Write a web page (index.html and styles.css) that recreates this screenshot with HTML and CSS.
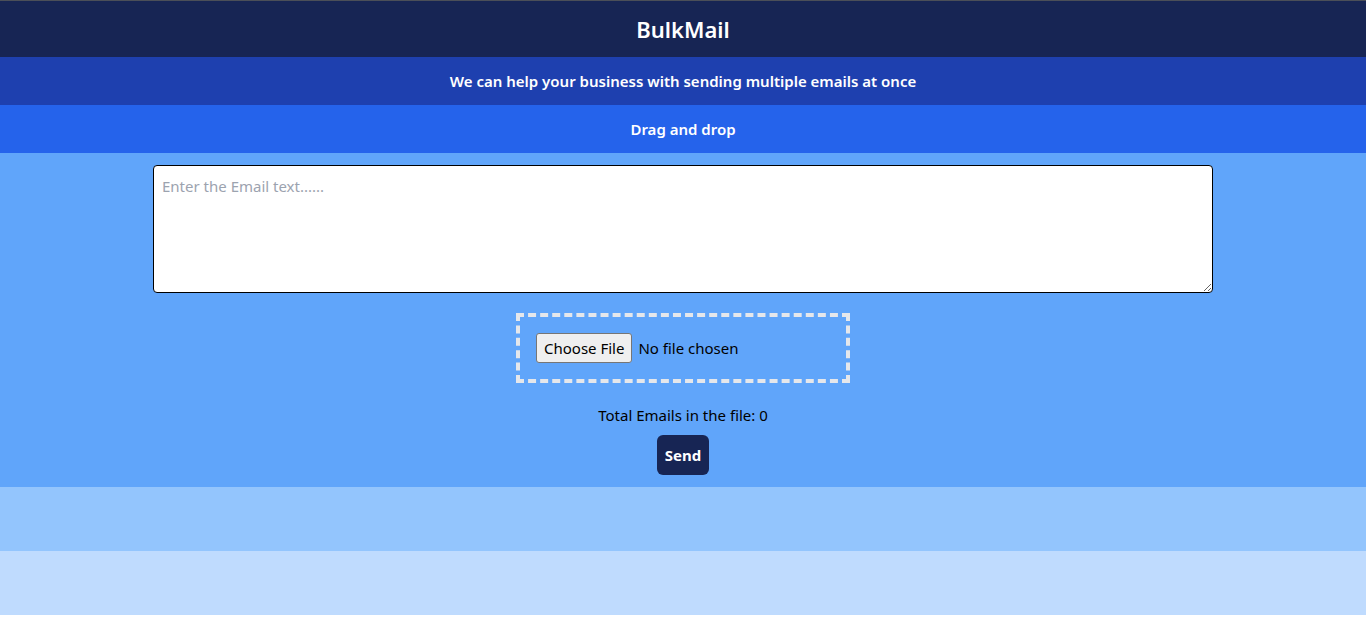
FILE: index.html
```html
<!DOCTYPE html>
<html lang="en">
<head>
<meta charset="utf-8">
<title>BulkMail</title>
<link rel="stylesheet" href="styles.css">
</head>
<body>
  <div class="top-line"></div>
  <header class="header">
    <h1 class="title">BulkMail</h1>
  </header>
  <div class="tagline">We can help your business with sending multiple emails at once</div>
  <div class="dragbar">Drag and drop</div>
  <main class="panel">
    <textarea class="email-text" placeholder="Enter the Email text......"></textarea>
    <div class="dropzone">
      <input type="file" class="file-input">
    </div>
    <p class="count">Total Emails in the file: 0</p>
    <button class="send">Send</button>
  </main>
  <div class="band band-300"></div>
  <div class="band band-200"></div>
</body>
</html>
```
FILE: styles.css
```css
* { box-sizing: border-box; }
html, body { margin: 0; padding: 0; background: #fff; }
body {
  font-family: "Noto Sans", "Open Sans", sans-serif;
  font-size: 15px;
  line-height: 24px;
}
.top-line { height: 1px; background: #4b4f58; }
.header {
  background: #172554;
  color: #fff;
  text-align: center;
  padding: 12px 0;
}
.title {
  margin: 0;
  font-size: 22px;
  line-height: 32px;
  font-weight: 600;
}
.tagline {
  background: #1e40af;
  color: #fff;
  text-align: center;
  padding: 12px 0;
  font-weight: 600;
  font-size: 15px;
}
.dragbar {
  background: #2563eb;
  color: #fff;
  text-align: center;
  padding: 12px 0;
  font-weight: 600;
  font-size: 15px;
}
.panel {
  background: #60a5fa;
  padding: 12px 0;
  display: flex;
  flex-direction: column;
  align-items: center;
}
.email-text {
  display: block;
  width: 1060px;
  height: 128px;
  border: 1px solid #000;
  border-radius: 4px;
  padding: 8px;
  font-family: inherit;
  font-size: 15px;
  line-height: 24px;
  background: #fff;
  resize: both;
}
.email-text::placeholder { color: #9ca3af; }
.dropzone {
  margin-top: 20px;
  border: 4px dashed #e5e7eb;
  padding: 0 16px;
  width: 334px;
  height: 70px;
  display: flex;
  align-items: center;
}
.file-input {
  font-family: inherit;
  font-size: 15px;
  line-height: 22px;
  color: #000;
}
.file-input::file-selector-button {
  font-family: inherit;
  font-size: 15px;
  line-height: 22px;
  padding: 3px 7px;
  margin-right: 6px;
  border: 1px solid #767676;
  border-radius: 3px;
  background: #efefef;
  color: #000;
}
.count {
  margin: 20px 0 0;
  color: #000;
}
.send {
  margin-top: 8px;
  background: #172554;
  color: #fff;
  border: none;
  border-radius: 6px;
  padding: 8px;
  font-family: inherit;
  font-size: 15px;
  line-height: 24px;
  font-weight: 700;
}
.band { height: 64px; }
.band-300 { background: #93c5fd; }
.band-200 { background: #bfdbfe; }
```
